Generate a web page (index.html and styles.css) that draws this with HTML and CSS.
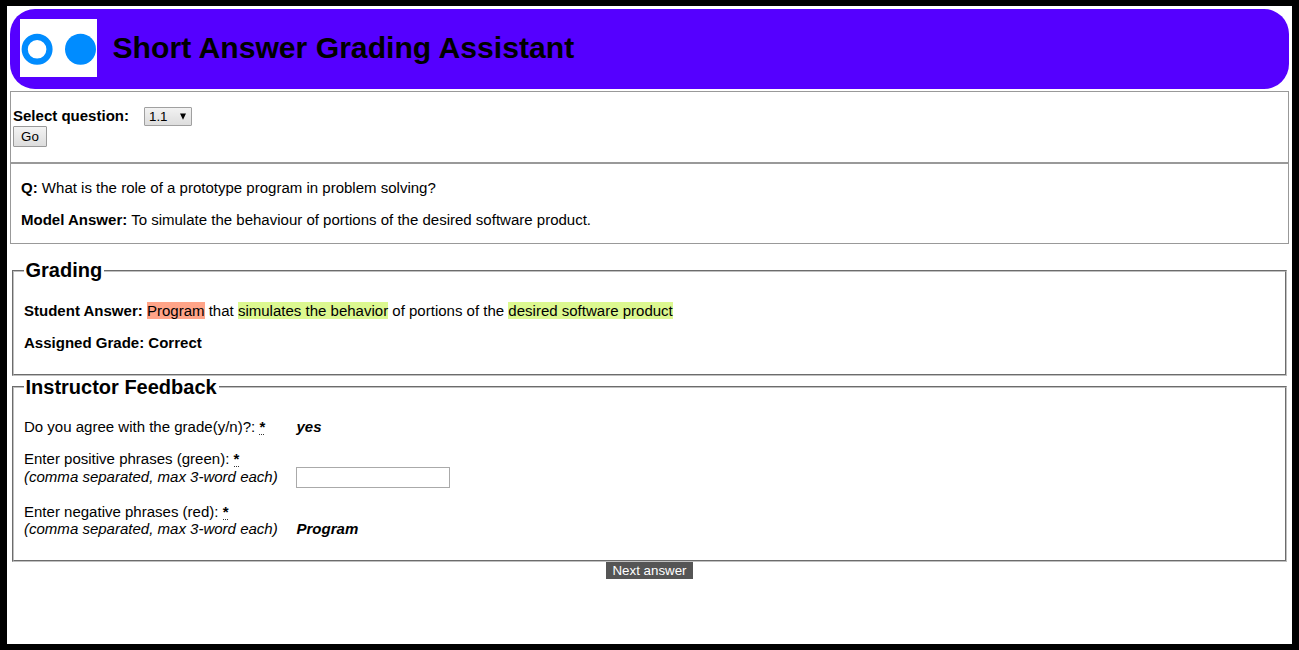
FILE: index.html
```html
<!DOCTYPE html>
<html lang="en">
<head>
<meta charset="utf-8">
<title>Short Answer Grading Assistant</title>
<link rel="stylesheet" href="styles.css">
</head>
<body>
<header class="banner">
  <svg class="logo" width="77" height="58" viewBox="0 0 77 58">
    <rect width="77" height="58" fill="#fff"/>
    <circle cx="17.1" cy="30.3" r="12.4" fill="none" stroke="#008cff" stroke-width="6.2"/>
    <circle cx="60.5" cy="30.3" r="15.5" fill="#008cff"/>
  </svg>
  <h1 class="title">Short Answer Grading Assistant</h1>
</header>
<form class="selector">
  <div class="selector-row">
    <b>Select question:</b>
    <span class="select" role="listbox"><span>1.1</span><svg width="8" height="7" viewBox="0 0 8 7"><path d="M1 .5H7L4 6.7z"/></svg></span>
  </div>
  <button class="go" type="button">Go</button>
</form>
<section class="question">
  <p><b>Q:</b> What is the role of a prototype program in problem solving?</p>
  <p><b>Model Answer:</b> To simulate the behaviour of portions of the desired software product.</p>
</section>
<fieldset class="panel grading">
  <legend>Grading</legend>
  <p><b>Student Answer:</b> <span class="bad">Program</span> that <span class="good">simulates the behavior</span> of portions of the <span class="good">desired software product</span></p>
  <p><b>Assigned Grade: Correct</b></p>
</fieldset>
<fieldset class="panel feedback">
  <legend>Instructor Feedback</legend>
  <div class="field"><label>Do you agree with the grade(y/n)?: <abbr title="required">*</abbr></label><span class="value">yes</span></div>
  <div class="field positive"><label>Enter positive phrases (green): <abbr title="required">*</abbr><br><i>(comma separated, max 3-word each)</i></label><input class="phrases" type="text"></div>
  <div class="field negative"><label>Enter negative phrases (red): <abbr title="required">*</abbr><br><i>(comma separated, max 3-word each)</i></label><span class="value">Program</span></div>
</fieldset>
<button class="next" type="button">Next answer</button>
</body>
</html>
```
FILE: styles.css
```css
* { box-sizing: border-box; }
html { height: 100%; }
body {
  margin: 0;
  height: 650px;
  overflow: hidden;
  border: solid #000;
  border-width: 6px 7px;
  padding: 3px 3px 0;
  background: #fff;
  color: #000;
  font: 15.02px/17px "Liberation Sans", Arial, sans-serif;
}
p { margin: 15px 0; }
.banner {
  display: flex;
  align-items: flex-start;
  height: 80px;
  padding: 10px 10px 0;
  border-radius: 25px;
  background: #5500ff;
}
.logo { display: block; }
.title { margin: 12px 0 0 15.5px; font-size: 30.15px; line-height: 34px; }
.selector {
  display: flow-root;
  height: 72px;
  margin-top: 2px;
  padding: 15px 2px 0;
  border: 1px solid #999;
}
.selector-row { display: flex; height: 19px; }
.selector-row b { width: 131px; }
.select {
  display: flex;
  align-items: center;
  justify-content: space-between;
  width: 48px;
  height: 19px;
  padding: 0 4px;
  border: 1px solid #a0a0a0;
  border-radius: 1px;
  background: linear-gradient(#f2f2f2, #ddd);
  font-size: 13.33px;
}
.go {
  display: block;
  width: 34px;
  height: 21px;
  padding: 0;
  border: 1px solid #999;
  border-radius: 1px;
  background: linear-gradient(#f3f3f3, #ddd);
  color: #000;
  font: 13.33px/15px "Liberation Sans", Arial, sans-serif;
}
.question {
  display: flow-root;
  height: 81px;
  padding: 0 10px;
  border: 1px solid #999;
}
.panel {
  margin: 0 2px;
  padding: 5px 10px 0;
  border: 2px groove #c0c0c0;
}
.grading { height: 117px; margin-top: 15px; }
.feedback { height: 186px; padding-top: 5px; }
legend { padding: 0 2px 0 1.5px; font-size: 20px; line-height: 23px; font-weight: bold; }
.feedback legend { height: 22px; }
.bad { background: #ffa488; }
.good { background: #dcf890; }
.field { display: flex; align-items: flex-end; margin-top: 15px; }
.field label { width: 272px; }
.positive label { padding-bottom: 2px; line-height: 18px; }
.positive { height: 38px; }
.positive label, .negative label { white-space: nowrap; }
abbr {
  font-weight: bold;
  text-decoration: none;
  background: repeating-linear-gradient(90deg, #333 0 1px, transparent 1px 2px) 0 100% / 100% 1px no-repeat;
}
.value { margin-left: 0.5px; font-weight: bold; font-style: italic; }
.phrases { width: 154px; height: 21px; margin: 0; padding: 1px; border: 1px solid #aaa; }
.next {
  display: block;
  width: 87px;
  height: 17px;
  margin: 0 auto;
  padding: 0;
  border: 0;
  background: #555;
  color: #fff;
  font: 13.33px/17px "Liberation Sans", Arial, sans-serif;
}
```
